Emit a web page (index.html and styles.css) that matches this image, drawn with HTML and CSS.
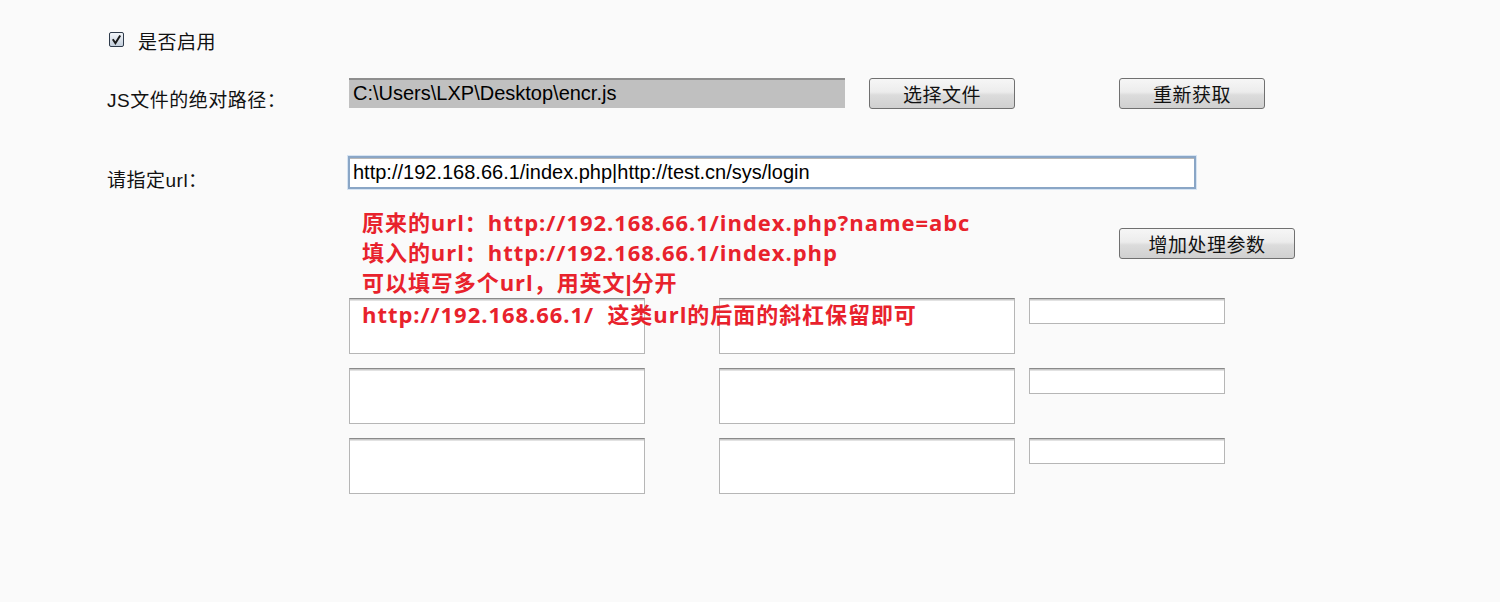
FILE: index.html
```html
<!DOCTYPE html>
<html lang="zh">
<head>
<meta charset="utf-8">
<link rel="stylesheet" href="styles.css">
</head>
<body>
<div class="page">
  <div class="enable">
    <span class="check">
      <svg viewBox="0 0 13 13" width="13" height="13"><path d="M2.8 6.3 L5.4 10.2 L10.2 2.4" fill="none" stroke="#1a1a1a" stroke-width="2"/></svg>
    </span>
    <span class="enable-label">是否启用</span>
  </div>

  <div class="row row-js">
    <div class="label label-js">JS文件的绝对路径：</div>
    <div class="path-box">C:\Users\LXP\Desktop\encr.js</div>
    <button class="btn btn-choose">选择文件</button>
    <button class="btn btn-reload">重新获取</button>
  </div>

  <div class="row row-url">
    <div class="label label-url">请指定url：</div>
    <div class="url-box">http://192.168.66.1/index.php|http://test.cn/sys/login</div>
  </div>

  <div class="add-row">
    <button class="btn btn-add">增加处理参数</button>
  </div>

  <div class="params">
    <div class="ta"></div><div class="ta"></div><div class="small"></div>
    <div class="ta"></div><div class="ta"></div><div class="small"></div>
    <div class="ta"></div><div class="ta"></div><div class="small"></div>
  </div>

  <div class="note">
    <div>原来的url：http://192.168.66.1/index.php?name=abc</div>
    <div>填入的url：http://192.168.66.1/index.php</div>
    <div>可以填写多个url，用英文<span class="bar">|</span>分开</div>
    <div>http://192.168.66.1/&nbsp;&nbsp;这类url的后面的斜杠保留即可</div>
  </div>
</div>
</body>
</html>
```

FILE: styles.css
```css
html, body {
  margin: 0;
  padding: 0;
  background: #fafafa;
}
body {
  width: 1500px;
  height: 602px;
  overflow: hidden;
  font-family: "Liberation Sans", "Noto Sans CJK SC", sans-serif;
  color: #000;
}
.page {
  position: relative;
  padding: 30px 0 0 107px;
}
.enable {
  display: flex;
  align-items: flex-start;
  height: 26px;
  padding-left: 2px;
}
.check {
  width: 13px;
  height: 13px;
  margin-top: 2px;
  border: 1px solid #2e3a4a;
  border-radius: 2px;
  background: linear-gradient(#f2f5f9, #c3cedb);
  display: flex;
}
.enable-label {
  margin-left: 14px;
  font-size: 19px;
  letter-spacing: 0.5px;
  line-height: 26px;
  color: #111;
}
.row {
  display: flex;
  align-items: flex-start;
}
.row-js { margin-top: 22px; height: 31px; }
.row-url { margin-top: 47px; height: 33px; }
.label {
  width: 242px;
  flex: none;
  font-size: 19px;
  letter-spacing: 0.5px;
  line-height: 30px;
  color: #111;
}
.label-js { padding-top: 8px; }
.label-url { padding-top: 10px; width: 241px; }
.path-box {
  width: 496px;
  height: 30px;
  box-sizing: border-box;
  background: #c0c0c0;
  border-top: 2px solid #8e8e8e;
  padding-left: 4px;
  font-family: "Liberation Sans", Arial, sans-serif;
  font-size: 20px;
  line-height: 27px;
  color: #000;
}
.btn {
  box-sizing: border-box;
  height: 31px;
  border: 1px solid #707070;
  border-radius: 3px;
  background: linear-gradient(#f6f6f6 0%, #ececec 45%, #dcdcdc 55%, #d0d0d0 100%);
  font-family: "Noto Sans CJK SC", sans-serif;
  font-size: 19px;
  letter-spacing: 0.5px;
  color: #111;
  padding: 0;
  line-height: 28px;
}
.btn-choose { width: 146px; margin-left: 24px; }
.btn-reload { width: 146px; margin-left: 104px; }
.url-box {
  width: 848px;
  height: 33px;
  box-sizing: border-box;
  background: #fff;
  border: 2px solid #8aa6c6;
  box-shadow: inset 0 1px 0 #b8b8b8, 0 0 0 1px #d6e4f3;
  padding-left: 3px;
  font-family: "Liberation Sans", Arial, sans-serif;
  font-size: 20px;
  line-height: 29px;
}
.add-row {
  margin-top: 39px;
  padding-left: 1012px;
  height: 31px;
}
.btn-add { width: 176px; }
.params {
  margin-top: 39px;
  margin-left: 242px;
  display: grid;
  grid-template-columns: 296px 296px 196px;
  grid-auto-rows: 56px;
  column-gap: 74px;
  row-gap: 14px;
}
.params .small {
  margin-left: -60px;
  width: 196px;
  justify-self: start;
  align-self: start;
}
.ta, .small {
  box-sizing: border-box;
  background: #fff;
  border: 1px solid #b6b6b6;
  border-top: 1px solid #8a8a8a;
  box-shadow: inset 0 1px 0 #c8c8c8, inset 0 2px 0 #e2e2e2;
}
.small { height: 26px; }
.note {
  position: absolute;
  left: 362px;
  top: 207px;
  font-family: "Open Sans", "Noto Sans CJK SC", sans-serif;
  font-weight: bold;
  font-size: 22px;
  letter-spacing: 0.95px;
  line-height: 30px;
  color: #e8222c;
  white-space: nowrap;
}
.bar {
  font-family: "Liberation Sans", sans-serif;
  letter-spacing: 0;
}
```
